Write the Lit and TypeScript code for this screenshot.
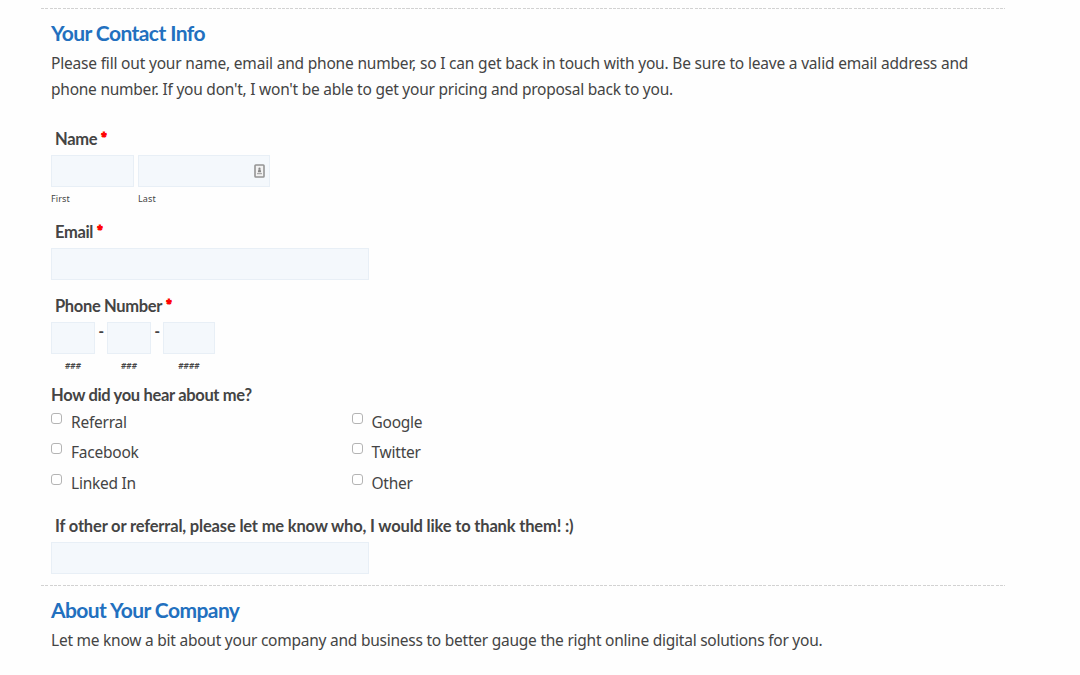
import { css, html, LitElement, nothing } from "lit";
import { customElement, property } from "lit/decorators.js";

@customElement("form-label")
class FormLabel extends LitElement {
  @property({ type: Boolean }) required = false;

  static styles = css`
    :host {
      display: block;
      height: 24px;
      line-height: 25px;
      font-family: Lato, sans-serif;
      font-size: 16.5px;
      font-weight: 700;
      letter-spacing: -0.33px;
      white-space: nowrap;
    }

    .required {
      position: relative;
      top: -5px;
      margin-left: 4px;
      color: #f00;
      font-family: "Open Sans", sans-serif;
      font-size: 10px;
      font-weight: 800;
      line-height: 1;
      -webkit-text-stroke: 0.8px #f00;
    }
  `;

  render() {
    return html`<slot></slot>${this.required
      ? html`<span class="required">*</span>`
      : nothing}`;
  }
}

@customElement("check-option")
class CheckOption extends LitElement {
  static styles = css`
    :host {
      display: block;
      height: 30.3px;
    }

    label {
      display: flex;
      gap: 9px;
      line-height: 29px;
    }

    input {
      appearance: none;
      box-sizing: border-box;
      width: 11px;
      height: 11px;
      margin: 5px 0 0;
      border: 1px solid #b4b4b4;
      border-radius: 3px;
      background: #fff;
    }
  `;

  render() {
    return html`<label><input type="checkbox" /><span><slot></slot></span></label>`;
  }
}

@customElement("app-root")
class AppRoot extends LitElement {
  static styles = css`
    :host {
      display: block;
      box-sizing: border-box;
      height: 675px;
      padding: 8px 75px 0 41px;
      overflow: hidden;
      background: #fefefe;
      color: #444;
      font-family: "Noto Sans", "Open Sans", sans-serif;
      font-size: 15.5px;
      letter-spacing: -0.24px;
    }

    section {
      padding: 13px 10px 0;
    }

    .divider {
      height: 1px;
      background: repeating-linear-gradient(90deg, #d2d2d2 0 3px, transparent 3px 4.3px);
    }

    h2 {
      margin: 0 0 6px;
      color: #2270bf;
      font-family: Lato, sans-serif;
      font-size: 21px;
      font-weight: 700;
      line-height: 22px;
      letter-spacing: -0.57px;
    }

    p {
      margin: 0;
      line-height: 26px;
      white-space: nowrap;
    }

    .lead {
      letter-spacing: -0.19px;
    }

    .indent {
      padding-left: 4px;
    }

    .row {
      display: flex;
    }

    .input {
      box-sizing: border-box;
      display: block;
      width: 100%;
      height: 32px;
      margin: 0;
      padding: 0 6px;
      border: 1px solid #e8eff6;
      border-radius: 0;
      outline: none;
      background: #f4f8fc;
      font: inherit;
    }

    .wide {
      width: 318px;
    }

    .name {
      margin-top: 25px;
    }

    .names {
      gap: 4px;
      margin-top: 4px;
    }

    .first {
      width: 83px;
    }

    .last {
      width: 132px;
    }

    .field {
      display: grid;
      align-items: center;
    }

    .field > * {
      grid-area: 1 / 1;
    }

    .contact {
      justify-self: end;
      margin-right: 5px;
    }

    .caption {
      height: 14px;
      margin-top: 5px;
      font-size: 9px;
      line-height: 14px;
      letter-spacing: 0.1px;
    }

    .email {
      margin-top: 14px;
    }

    .email + .input,
    .phone + .row,
    .who + .input {
      margin-top: 4px;
    }

    .phone {
      margin-top: 14px;
    }

    .part {
      width: 44px;
    }

    .part.long {
      width: 52px;
    }

    .part .caption {
      text-align: center;
      font-style: italic;
      font-weight: 600;
      font-size: 8px;
      letter-spacing: 0.2px;
    }

    .dash {
      width: 12px;
      line-height: 18px;
      text-align: center;
      font-weight: 600;
    }

    .source {
      margin-top: 10px;
    }

    .options {
      display: grid;
      grid-template-columns: 300.5px 1fr;
      margin-top: 1px;
    }

    .who {
      margin-top: 15.1px;
      letter-spacing: -0.17px;
    }

    .divider.second {
      margin-top: 11px;
    }
  `;

  _renderPart(mark: string, long = false) {
    return html`
      <div class="part ${long ? "long" : ""}">
        <input class="input" type="text" />
        <div class="caption">${mark}</div>
      </div>
    `;
  }

  render() {
    const sources = ["Referral", "Google", "Facebook", "Twitter", "Linked In", "Other"];

    return html`
      <div class="divider"></div>
      <section>
        <h2>Your Contact Info</h2>
        <p>
          <span class="lead">Please fill out your name, email and phone number, so I can get back in
          touch with you. Be sure to leave a valid email address and</span><br />phone number. If you
          don't, I won't be able to get your pricing and proposal back to you.
        </p>

        <form-label class="indent name" required>Name</form-label>
        <div class="row names">
          <div class="first">
            <input class="input" type="text" />
            <div class="caption">First</div>
          </div>
          <div class="last">
            <div class="field">
              <input class="input" type="text" />
              <svg class="contact" width="11" height="14" viewBox="0 0 11 14">
                <rect x="1" y="1" width="9" height="12" rx="0.8" fill="#f2f2f2" stroke="#949494" stroke-width="1.6" />
                <circle cx="5.5" cy="4.7" r="1.1" fill="#888" />
                <path d="M4.4 5.5h2.2l.6 2.8H3.8z" fill="#888" />
                <path d="M3 9.7h5" stroke="#999" />
              </svg>
            </div>
            <div class="caption">Last</div>
          </div>
        </div>

        <form-label class="indent email" required>Email</form-label>
        <input class="input wide" type="email" />

        <form-label class="indent phone" required>Phone Number</form-label>
        <div class="row">
          ${this._renderPart("###")}
          <span class="dash">-</span>
          ${this._renderPart("###")}
          <span class="dash">-</span>
          ${this._renderPart("####", true)}
        </div>

        <form-label class="source">How did you hear about me?</form-label>
        <div class="options">
          ${sources.map((source) => html`<check-option>${source}</check-option>`)}
        </div>

        <form-label class="indent who">If other or referral, please let me know who, I would like to thank them! :)</form-label>
        <input class="input wide" type="text" />
      </section>

      <div class="divider second"></div>
      <section>
        <h2>About Your Company</h2>
        <p>Let me know a bit about your company and business to better gauge the right online digital solutions for you.</p>
      </section>
    `;
  }
}
